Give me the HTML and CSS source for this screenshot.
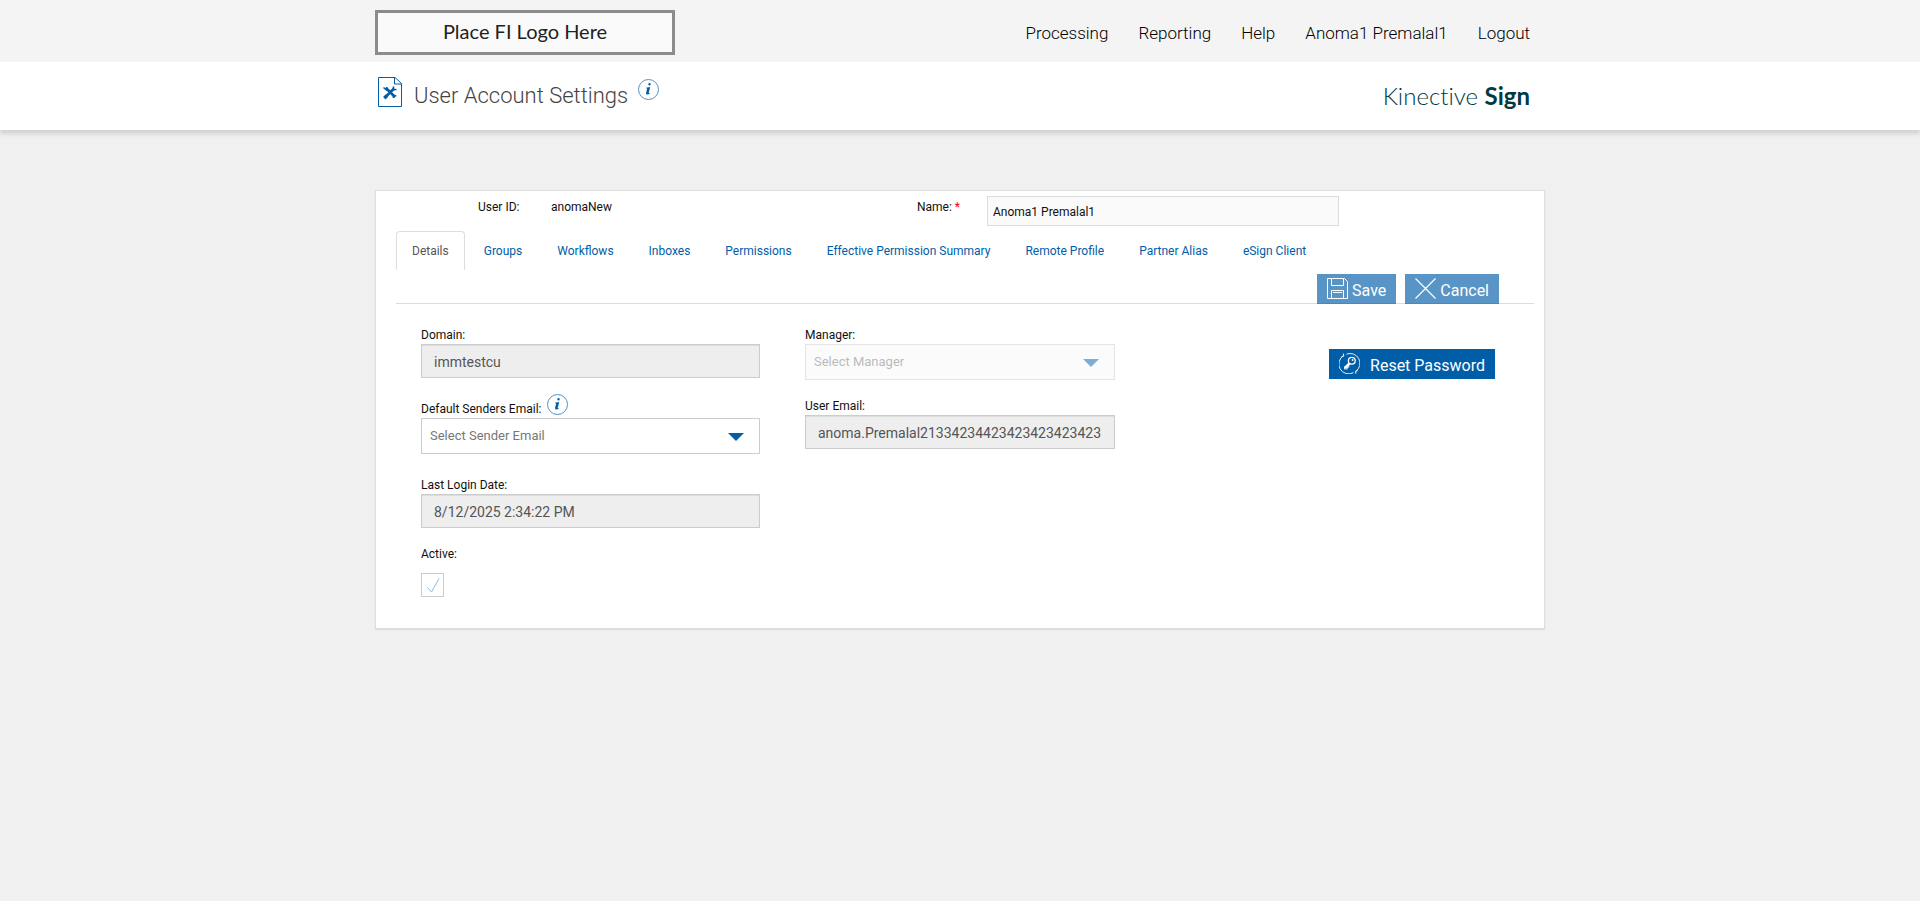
FILE: index.html
```html
<!DOCTYPE html>
<html lang="en">
<head>
<meta charset="utf-8">
<title>User Account Settings</title>
<link rel="stylesheet" href="styles.css">
</head>
<body>
<header>
  <div class="topbar">
    <div class="container topbar-inner">
      <div class="fi-logo">Place FI Logo Here</div>
      <nav class="main-nav" aria-label="Main">
        <a href="#">Processing</a>
        <a href="#">Reporting</a>
        <a href="#">Help</a>
        <a href="#">Anoma1 Premalal1</a>
        <a href="#">Logout</a>
      </nav>
    </div>
  </div>
  <div class="titlebar">
    <div class="container titlebar-inner">
      <svg class="page-icon" viewBox="0 0 24 30" fill="none" stroke="#005da8" aria-hidden="true">
        <path d="M.5 .5H17L23.500 6.500V29.500H.5Z"/>
        <path d="M16.500 .5V7H23.500"/>
        <path d="M8 11L17 20M7.500 20L16 11.500" stroke-width="2.600"/>
        <path d="M5.500 10.500L8.500 13L8.700 10M15.500 9.500V12.700L18.500 12.500M15.500 21V18.500L18.300 18.700" stroke-width="1.600"/>
        <path d="M6.300 21.200L9 18.500" stroke-width="3.400"/>
      </svg>
      <h1>User Account Settings</h1>
      <button class="info title-info" type="button" aria-label="Page information">
        <svg viewBox="0 0 21 21" aria-hidden="true"><circle cx="10.500" cy="10.500" r="10" fill="#fff" stroke="#3f83bd" stroke-width=".9"/><path d="M10.300 5.200a1.200 1.200 0 1 1 2.400 0a1.200 1.200 0 1 1-2.400 0M8 8.800L12.200 8L10.700 14Q10.500 14.700 11.900 13.800L12.100 14.300Q10.500 15.800 9 15.600Q7.700 15.300 8.100 13.800L9.200 9.400L8 9.300Z" fill="#005da8"/></svg>
      </button>
      <div class="product">Kinective <b>Sign</b></div>
    </div>
  </div>
</header>

<main class="container card">
  <div class="identity">
    <span>User ID:</span>
    <span>anomaNew</span>
    <label for="name">Name: <span class="required">*</span></label>
    <input class="name-input" id="name" type="text" value="Anoma1 Premalal1">
  </div>
  <nav class="tabs" aria-label="Account sections">
    <a class="active" href="#" aria-current="page">Details</a>
    <a href="#">Groups</a>
    <a href="#">Workflows</a>
    <a href="#">Inboxes</a>
    <a href="#">Permissions</a>
    <a href="#">Effective Permission Summary</a>
    <a href="#">Remote Profile</a>
    <a href="#">Partner Alias</a>
    <a href="#">eSign Client</a>
  </nav>
  <div class="actions">
    <button class="btn" type="button" disabled>
      <svg viewBox="0 0 21 21" fill="none" stroke="#fff" aria-hidden="true"><path d="M.5 .5H17.500L20.500 3.500V20.500H.5ZM4.500 .5V7.500H16.500V.5M4.500 20.500V12.500H16.500V20.500M6 14.500H15"/></svg>
      Save
    </button>
    <button class="btn" type="button" disabled>
      <svg viewBox="0 0 21 21" fill="none" stroke="#fff" stroke-width="1.200" aria-hidden="true"><path d="M.5 .5L20.500 20.500M20.500 .5L.5 20.500"/></svg>
      Cancel
    </button>
  </div>
  <form class="details">
    <div class="column">
      <div class="field">
        <label for="domain">Domain:</label>
        <input id="domain" type="text" value="immtestcu" disabled>
      </div>
      <div class="field">
        <div class="label-row">
          <label for="sender">Default Senders Email:</label>
          <button class="info" type="button" aria-label="Default senders email information">
            <svg viewBox="0 0 21 21" aria-hidden="true"><circle cx="10.500" cy="10.500" r="10" fill="#fff" stroke="#3f83bd" stroke-width=".9"/><path d="M10.300 5.200a1.200 1.200 0 1 1 2.400 0a1.200 1.200 0 1 1-2.400 0M8 8.800L12.200 8L10.700 14Q10.500 14.700 11.900 13.800L12.100 14.300Q10.500 15.800 9 15.600Q7.700 15.300 8.100 13.800L9.200 9.400L8 9.300Z" fill="#005da8"/></svg>
          </button>
        </div>
        <div class="select">
          <select id="sender"><option>Select Sender Email</option></select>
          <svg viewBox="0 0 16 8" aria-hidden="true"><path d="M0 0H16L8 8Z" fill="#005da8"/></svg>
        </div>
      </div>
      <div class="field">
        <label for="login">Last Login Date:</label>
        <input id="login" type="text" value="8/12/2025 2:34:22 PM" disabled>
      </div>
      <div class="field check-field">
        <label for="active">Active:</label>
        <div class="check">
          <input id="active" type="checkbox" checked disabled>
          <svg viewBox="0 0 23 24" fill="none" stroke="#8cbcdf" aria-hidden="true"><path d="M6.500 14.500L10.500 19L18 5.500"/></svg>
        </div>
      </div>
    </div>
    <div class="column second">
      <div class="field">
        <label for="manager">Manager:</label>
        <div class="select is-disabled">
          <select id="manager" disabled><option>Select Manager</option></select>
          <svg viewBox="0 0 16 8" aria-hidden="true"><path d="M0 0H16L8 8Z" fill="#005da8"/></svg>
        </div>
      </div>
      <div class="field">
        <label for="email">User Email:</label>
        <input id="email" type="text" value="anoma.Premalal21334234423423423423423" disabled>
      </div>
    </div>
    <div class="reset">
      <button class="btn" type="button">
        <svg viewBox="0 0 21 21" fill="none" stroke="#fff" aria-hidden="true"><path d="M4.800 2.500A9.800 9.800 0 0 0 14.500 19.600M7.500 1.200A9.800 9.800 0 0 1 16.800 18.300" stroke-width=".9"/><path d="M4.200 .5L4.900 3L2.500 3.600M18.800 17.600L16.500 18.300L17 20.800" stroke-width=".9"/><circle cx="12.800" cy="7.800" r="3.400" stroke-width="1.300"/><circle cx="13.600" cy="7" r=".9" fill="#fff" stroke="none"/><path d="M10.500 10.300L6 14.800" stroke-width="2.600"/><path d="M5.500 13.500V16H8.200V14.200H9.800V12.500" stroke-width=".9"/></svg>
        Reset Password
      </button>
    </div>
  </form>
</main>
</body>
</html>
```
FILE: styles.css
```css
* { box-sizing: border-box; }

body {
  margin: 0;
  min-height: 100vh;
  background: #f0f0f0;
  color: #111;
  font: 12px/18px Roboto, "Liberation Sans", sans-serif;
}

a { text-decoration: none; }
button, input, select { font: inherit; }

.container { width: 100%; max-width: 1170px; margin: 0 auto; }

/* Header */
.topbar { background: #f4f4f4; }
.topbar-inner {
  display: flex;
  justify-content: space-between;
  padding: 10px 15px 7px 0;
}
.fi-logo {
  width: 300px;
  border: 3px solid #8c8c8c;
  background: #fafafa;
  color: #222;
  font: 20px/37px Lato, sans-serif;
  padding-bottom: 2px;
  text-align: center;
}
.main-nav { display: flex; align-items: center; gap: 30px; }
.main-nav a { color: #000; font-size: 17px; font-weight: 300; line-height: 24px; }

.titlebar { background: #fff; box-shadow: 0 4px 4px rgba(0, 0, 0, .12); }
.titlebar-inner {
  display: flex;
  align-items: center;
  min-height: 68px;
  padding: 0 15px 0 3px;
}
.page-icon { width: 24px; height: 30px; margin: 0 12px 8px 0; }
h1 { margin: 0; color: #444; font-size: 22px; font-weight: 300; line-height: 32px; }
.info { width: 21px; height: 21px; padding: 0; border: 0; background: none; }
.info svg, .page-icon { display: block; }
.title-info { margin: 0 0 14px 10px; }
.product {
  margin-left: auto;
  color: #003b43;
  font: 300 24px/32px Lato, sans-serif;
  font-variant-ligatures: none;
}
.product b { font-weight: 700; }

/* Card */
.card {
  margin-top: 60px;
  padding: 5px 10px 31px 20px;
  border: 1px solid #ddd;
  background: #fff;
  box-shadow: 0 1px 1px rgba(0, 0, 0, .08);
}
.identity {
  display: grid;
  grid-template-columns: 73fr 366fr 70fr 352fr 195fr;
  align-items: start;
  padding-left: 82px;
}
.identity > span, .identity > label { padding-top: 2px; }
.required { color: #f00; }
.name-input {
  width: 100%;
  height: 30px;
  padding: 2px 5px 0;
  border: 1px solid #ddd;
  background: #fafafa;
  color: #111;
}

.tabs { display: flex; gap: 3px; margin-top: 5px; }
.tabs a {
  padding: 10px 15px;
  border: 1px solid transparent;
  border-bottom: 0;
  border-radius: 4px 4px 0 0;
  color: #005da8;
}
.tabs .active { border-color: #ddd; color: #555; }

.actions {
  display: flex;
  justify-content: flex-end;
  gap: 9px;
  margin-top: 4px;
  padding-right: 35px;
  border-bottom: 1px solid #ddd;
}
.btn {
  display: flex;
  align-items: flex-start;
  gap: 4px;
  height: 30px;
  padding: 4px 10px 0;
  border: 0;
  background: #005da8;
  color: #fff;
  font-size: 16px;
  line-height: 26px;
}
.btn svg { width: 21px; height: 21px; }
.btn:disabled { margin-bottom: -1px; opacity: .65; }

/* Details form */
.details {
  display: grid;
  grid-template-columns: 339fr 310fr 335fr;
  column-gap: 45px;
  padding: 22px 39px 0 25px;
}
.column { display: flex; flex-direction: column; gap: 22px; }
.second { gap: 17px; }
.field { display: flex; flex-direction: column; }
.field input[type="text"] {
  width: 100%;
  height: 34px;
  padding: 2px 12px 0;
  border: 1px solid #ccc;
  background: #eee;
  box-shadow: inset 0 1px 1px rgba(0, 0, 0, .08);
  color: #555;
  font-size: 14px;
}
.label-row { display: flex; align-items: flex-end; gap: 6px; height: 18px; }
.label-row .info { margin-bottom: 3px; }
.select { position: relative; border: 1px solid #ccc; background: #fff; }
.select select {
  display: block;
  width: 100%;
  height: 34px;
  padding: 0 40px 0 8px;
  border: 0;
  appearance: none;
  background: none;
  color: #777;
  font-size: 13px;
  opacity: 1;
}
.select svg {
  position: absolute;
  top: 14px;
  right: 15px;
  width: 16px;
  height: 8px;
  pointer-events: none;
}
.is-disabled { background: #f9f9f9; opacity: .5; }
.check-field { gap: 10px; margin-top: -5px; }
.check { position: relative; width: 23px; height: 24px; }
.check input {
  display: block;
  width: 23px;
  height: 24px;
  margin: 0;
  border: 1px solid #ccc;
  appearance: none;
}
.check svg { position: absolute; inset: 0; }
.reset { display: flex; justify-content: flex-end; align-items: flex-start; padding-top: 23px; }
.reset .btn { gap: 10px; }
```
